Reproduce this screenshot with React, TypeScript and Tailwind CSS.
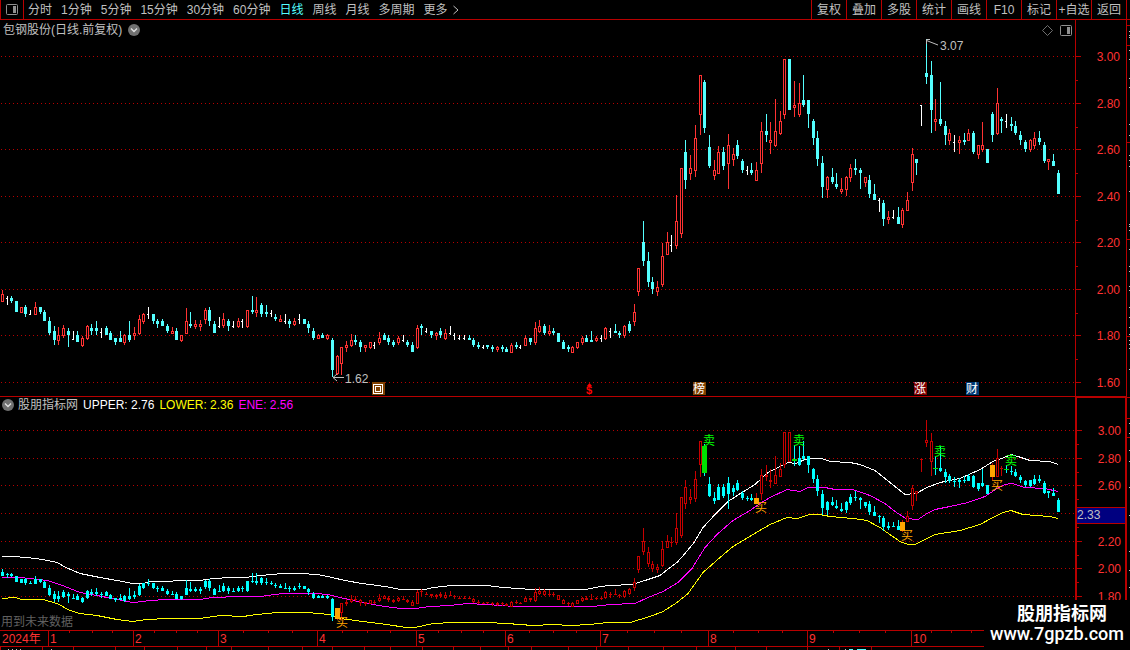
import { clsx } from "clsx";

type Kind = "up" | "down" | "flat";

type Candle = {
  x: number;
  kind: Kind;
  high: number;
  top: number;
  bottom: number;
  low: number;
};

const RED = "#b80000";
const FONT = "font-['Liberation_Sans','Noto_Sans_CJK_SC',sans-serif]";

const periods = ["分时", "1分钟", "5分钟", "15分钟", "30分钟", "60分钟", "日线", "周线", "月线", "多周期"];
const tools = ["复权", "叠加", "多股", "统计", "画线", "F10", "标记", "+自选", "返回"];

// One trading day per entry: u = up, d = down, f = flat, then high, body top, body bottom, low
const daily = `
u 290 294 302 302|f 296 298 298 305|d 296 298 301 303|d 301 301 312 312|u 307 307 313 313|d 305 307 314 317
f 310 314 314 315|u 302 307 315 315|d 307 307 312 314|d 310 312 321 321|d 317 321 333 335|d 326 331 340 345
u 327 335 341 345|u 325 328 336 338|d 328 331 335 347|f 331 339 339 340|d 331 335 342 342|u 336 338 346 347
u 325 326 339 340|d 324 328 331 335|d 321 328 331 335|f 328 332 332 338|d 326 328 335 335|d 331 333 340 340
d 338 338 342 345|d 331 338 342 342|u 334 335 343 345|d 321 335 340 342|u 327 333 336 340|u 315 319 334 335
u 313 314 322 324|f 307 314 314 319|d 314 314 321 324|d 319 321 324 328|d 319 321 326 326|d 324 326 331 333
u 327 331 334 334|d 328 331 340 340|u 335 335 341 342|u 308 321 334 334|d 312 324 326 328|u 320 324 327 329
u 320 324 327 331|u 308 310 320 324|d 307 310 321 326|d 321 324 333 333|f 317 326 326 328|u 313 319 326 328
d 319 321 326 331|f 321 326 326 328|u 318 321 327 328|f 319 321 321 328|u 310 310 327 328|d 296 310 312 314
u 297 310 313 317|d 303 305 314 317|d 305 312 314 317|f 310 313 313 317|d 314 317 319 321|u 315 319 322 322
f 314 321 321 324|d 319 321 324 328|u 318 321 325 326|f 314 319 319 324|d 319 319 324 324|d 321 324 328 333
d 328 331 338 340|u 334 335 339 339|d 333 335 338 338|u 334 335 339 340|d 338 340 370 377|u 355 356 374 375
u 347 347 364 375|u 341 345 348 352|u 334 340 346 347|d 335 340 342 345|d 340 342 347 352|u 345 345 348 352
u 342 342 348 349|f 342 345 345 349|u 332 338 343 345|d 333 335 340 340|d 335 338 342 345|d 340 342 345 347
u 336 338 343 345|f 335 340 340 342|d 340 342 345 347|d 342 345 352 352|u 325 328 348 349|d 324 326 328 335
f 328 331 331 333|d 331 331 335 338|u 332 333 336 340|d 328 331 335 338|u 329 333 339 340|f 326 333 333 335
f 333 335 335 340|f 335 338 338 340|f 335 338 338 340|d 335 338 340 340|d 338 340 345 347|d 342 345 347 349
f 345 347 347 349|d 345 345 347 349|d 345 347 349 352|u 346 347 350 352|d 345 347 349 352|d 347 349 352 352
u 343 345 353 353|d 342 345 347 349|f 345 347 347 349|u 335 338 346 346|d 338 338 342 345|u 322 328 343 345
u 320 326 332 333|d 324 326 333 335|u 325 331 334 336|d 328 331 333 335|d 333 333 342 342|d 340 342 349 349
d 345 347 349 352|u 346 347 353 353|u 342 342 348 349|u 336 338 343 345|d 335 338 342 342|d 331 340 342 342
u 336 338 341 342|f 335 338 338 342|u 327 328 339 340|f 328 331 331 338|d 324 331 333 333|d 331 333 335 338
u 325 326 336 338|d 321 324 331 333|u 304 312 322 326|u 268 268 292 296|d 221 242 261 266|d 252 261 282 287
d 277 282 289 294|u 281 287 292 296|u 243 256 285 287|u 232 242 255 255|f 235 245 245 252|u 195 221 246 249
u 168 168 234 238|d 140 152 180 189|u 155 168 174 180|u 125 138 171 177|u 75 75 115 135|d 80 82 128 133
d 135 147 166 168|u 160 170 176 180|u 146 152 174 174|d 147 152 166 170|u 134 145 164 189|u 148 154 160 166
d 140 145 156 159|d 159 161 170 173|f 166 170 170 175|d 163 170 173 175|u 162 170 181 181|u 122 131 164 173
d 114 131 135 142|u 122 140 143 154|u 99 131 146 147|u 111 121 134 135|u 59 59 115 119|d 59 59 110 110
u 81 105 108 117|u 83 103 115 117|d 75 100 105 107|d 100 100 114 128|d 119 121 138 145|d 131 138 159 166
d 156 163 187 198|u 176 177 190 198|d 168 177 182 184|d 173 184 187 189|u 178 189 192 194|u 176 177 190 196
u 164 168 178 182|d 159 168 170 175|d 168 170 173 189|u 177 177 183 187|d 175 180 194 198|d 184 194 200 200
f 198 200 200 212|d 200 203 219 226|u 211 217 220 224|f 210 217 217 219|d 207 217 224 224|u 208 210 225 228
u 192 200 211 211|u 148 154 183 191|d 159 159 163 175|f 105 105 105 126|d 39 73 77 84|d 61 75 110 133
u 99 119 122 131|d 82 119 124 126|d 121 126 135 145|u 129 133 141 145|f 135 142 142 152|u 136 140 143 154
d 133 140 142 145|u 129 133 141 141|d 131 133 152 154|u 145 145 155 159|u 122 145 150 152|d 149 149 163 163
d 112 114 135 142|u 88 103 134 135|d 117 119 121 133|f 114 121 121 128|d 117 124 126 131|d 121 126 133 135
d 131 135 140 145|d 140 142 149 152|u 139 140 150 152|u 132 138 146 149|d 131 138 142 145|d 142 145 161 163
u 159 159 162 170|d 154 161 166 166|d 170 173 194 194`;

const kinds: Record<string, Kind> = { u: "up", d: "down", f: "flat" };

const candles: Candle[] = daily
  .trim()
  .split(/[|\n]/)
  .map((entry, i) => {
    const [k, ...v] = entry.trim().split(" ");
    const [high, top, bottom, low] = v.map(Number);
    return { x: Math.floor(2.4 + i * 4.714), kind: kinds[k], high, top, bottom, low };
  });

// Trade signals by day index; the trend holds until the next one
const signals: Record<number, { side: "buy" | "sell"; x: number; y: number }> = {
  71: { side: "buy", x: 336, y: 627 },
  149: { side: "sell", x: 703, y: 445 },
  160: { side: "buy", x: 755, y: 512 },
  168: { side: "sell", x: 793, y: 445 },
  191: { side: "buy", x: 901, y: 540 },
  198: { side: "sell", x: 934, y: 456 },
  210: { side: "buy", x: 991, y: 490 },
  213: { side: "sell", x: 1005, y: 465 },
};

const bands = [
  {
    name: "UPPER",
    value: "2.76",
    color: "text-white",
    points:
      "2,556 14,556 36,558 48,560 57,562 66,567 80,573 100,577 117,580 133,583 143,583 150,581 167,581 180,580 200,580 213,578 232,577 245,577 260,575 283,573 300,573 318,574 332,577 345,580 362,583 385,586 401,589 425,589 433,587 452,585 487,585 503,587 519,588 530,589 586,589 600,586 610,585 632,584 645,580 660,575 670,567 677,562 685,553 694,542 703,527 715,514 728,501 742,492 755,484 768,472 780,466 788,462 796,463 805,459 812,458 822,458 830,461 850,462 860,464 875,470 890,482 905,494 916,493 927,487 940,482 960,478 980,469 993,461 1004,457 1011,454 1018,456 1030,460 1050,461 1058,464",
  },
  {
    name: "LOWER",
    value: "2.36",
    color: "text-[#ffff00]",
    points:
      "2,598 15,597 22,599 43,599 57,603 70,610 80,613 97,615 117,619 133,621 147,619 167,618 200,618 220,615 243,616 257,614 277,612 307,612 330,614 340,618 363,621 387,624 406,627 415,627 433,623 453,622 487,622 507,623 533,625 553,624 570,625 590,624 607,622 630,622 650,616 663,611 677,602 688,593 703,572 720,557 733,546 753,534 770,524 787,517 797,518 810,514 820,514 830,516 853,518 867,520 880,527 887,532 900,541 908,544 915,544 935,534 960,530 980,524 993,517 1003,512 1011,510 1023,514 1050,516 1058,518",
  },
  {
    name: "ENE",
    value: "2.56",
    color: "text-[#ff00ff]",
    points:
      "2,577 20,577 47,580 60,584 80,592 97,595 117,599 133,602 143,601 150,600 167,599 200,599 212,597 240,596 260,596 283,593 315,593 328,594 340,597 362,602 385,606 401,608 415,608 430,606 450,605 467,603 487,604 515,606 593,606 610,604 635,603 648,597 663,591 678,582 692,568 700,555 705,547 718,533 733,520 750,510 760,503 770,497 787,489 800,491 808,487 825,487 835,489 853,489 870,495 885,503 895,511 906,518 918,519 927,513 935,509 950,506 968,502 985,496 997,488 1005,484 1012,483 1025,487 1045,488 1058,491",
  },
];

const priceScale = [
  { label: "3.00", y: 56 },
  { label: "2.80", y: 103 },
  { label: "2.60", y: 149 },
  { label: "2.40", y: 196 },
  { label: "2.20", y: 242 },
  { label: "2.00", y: 289 },
  { label: "1.80", y: 335 },
  { label: "1.60", y: 382 },
];

const indicatorScale = [
  { label: "3.00", y: 430 },
  { label: "2.80", y: 458 },
  { label: "2.60", y: 485 },
  { label: "", y: 513 },
  { label: "2.20", y: 541 },
  { label: "2.00", y: 568 },
  { label: "1.80", y: 596 },
];

const months = [48, 133, 218, 317, 416, 505, 600, 708, 807, 911];
const weeks = [
  69, 92, 112, 154, 176, 197, 243, 268, 292, 342, 367, 390, 438, 461, 483, 529, 553, 576, 627, 654, 681, 733, 758, 782,
  833, 859, 885, 931, 951, 971,
];
const footTicks = [
  0, 42, 73, 115, 144, 177, 206, 231, 268, 302, 332, 364, 390, 422, 453, 480, 508, 531, 568, 596, 628, 663, 696, 735, 766,
  807, 839, 871,
];

const edgeMarks = [25, 45, 142, 239, 336, 397, 418, 437];
const edgeDots = [
  31, 35, 37, 50, 59, 78, 87, 124, 135, 155, 160, 166, 191, 224, 226, 230, 249, 266, 271, 286, 290, 307, 317, 327, 334,
  340, 344, 348, 369, 423, 433, 450, 461, 487, 515, 551, 570, 587,
];

const badges = [
  { text: "榜", x: 693, fill: "#804000" },
  { text: "涨", x: 914, fill: "#800000" },
  { text: "财", x: 966, fill: "#003a75" },
];

// Price panel pixels to indicator panel pixels
const toIndicator = (y: number) => Math.round(430.5 + (y - 56.5) * 0.594);

function SidePanelIcon() {
  return (
    <svg width="12" height="11" viewBox="0 0 12 11" aria-hidden>
      <rect x="0.5" y="0.5" width="11" height="10" rx="1" fill="none" stroke="#909090" />
      <rect x="7" y="2" width="3" height="7" fill="#909090" />
    </svg>
  );
}

function CollapseButton({ label }: { label: string }) {
  return (
    <button type="button" aria-label={label} className="grid h-3 w-3 place-items-center rounded-full bg-[#707070]">
      <svg width="8" height="6" viewBox="0 0 8 6" aria-hidden>
        <path d="M1 1.5 4 4.5 7 1.5" fill="none" stroke="#e0e0e0" strokeWidth="1.4" />
      </svg>
    </button>
  );
}

function Toolbar() {
  return (
    <header className="flex h-5 items-stretch border-b border-[#b80000]">
      <button
        type="button"
        aria-label="侧栏"
        className="grid w-6 shrink-0 place-items-center border-x border-[#b80000]"
      >
        <SidePanelIcon />
      </button>
      <nav className="flex flex-1 items-center gap-[9px] pl-1 whitespace-nowrap">
        {periods.map((p) => (
          <button key={p} type="button" className={clsx(p === "日线" && "text-[#54ffff]")}>
            {p}
          </button>
        ))}
        <button type="button" className="flex items-center gap-1">
          更多
          <svg width="8" height="10" viewBox="0 0 8 10" aria-hidden>
            <path d="M1.5 1 6 5 1.5 9" fill="none" stroke="#c0c0c0" />
          </svg>
        </button>
      </nav>
      <div className="mr-[3px] flex border-r border-[#b80000]">
        {tools.map((t) => (
          <button key={t} type="button" className="w-[35px] border-l border-[#b80000] whitespace-nowrap">
            {t}
          </button>
        ))}
      </div>
    </header>
  );
}

function Grid({ scale }: { scale: { y: number }[] }) {
  return (
    <>
      {scale.map(({ y }) => (
        <line key={y} x1="1" x2="100%" y1={y + 0.5} y2={y + 0.5} stroke={RED} strokeDasharray="1 3" />
      ))}
    </>
  );
}

function Bar({ x, high, top, bottom, low, color, hollow }: Omit<Candle, "kind"> & {
  color: string;
  hollow?: boolean;
}) {
  return (
    <g shapeRendering="crispEdges">
      <rect x={x} y={high} width="1" height={Math.max(1, low - high)} fill={color} />
      <rect x={x - 1} y={top} width="3" height={Math.max(1, bottom - top)} fill={color} />
      {hollow && bottom - top > 2 && <rect x={x} y={top + 1} width="1" height={bottom - top - 2} fill="#000" />}
    </g>
  );
}

function PriceCandles() {
  return (
    <>
      {candles.map((c) =>
        c.kind === "flat" ? (
          <g key={c.x} fill="#fff" shapeRendering="crispEdges">
            <rect x={c.x} y={c.high} width="1" height={c.low - c.high} />
            <rect x={c.x - 1} y={c.top} width="2" height="1" />
          </g>
        ) : (
          <Bar key={c.x} {...c} hollow={c.kind === "up"} color={c.kind === "up" ? "#ff3232" : "#54ffff"} />
        ),
      )}
    </>
  );
}

function TrendCandles() {
  let holding = false;
  return (
    <>
      {candles.map((c, i) => {
        const signal = signals[i];
        if (signal) holding = signal.side === "buy";
        const bar = {
          x: c.x,
          high: toIndicator(c.high),
          top: toIndicator(c.top),
          bottom: toIndicator(c.bottom),
          low: toIndicator(c.low),
        };
        const color = holding ? "#c80000" : "#00ffff";
        if (!signal) return <Bar key={c.x} {...bar} hollow={holding} color={color} />;
        return (
          <g key={c.x}>
            <Bar {...bar} color={color} />
            <rect
              x={c.x - 2}
              y={bar.top}
              width="5"
              height={Math.max(1, bar.bottom - bar.top)}
              fill={signal.side === "buy" ? "#ffa500" : "#00e000"}
            />
          </g>
        );
      })}
    </>
  );
}

function PriceChart() {
  return (
    <svg className="block h-[376px] w-full overflow-visible text-[12px]" role="img" aria-label="包钢股份日线">
      <g transform="translate(0 -20)">
        <Grid scale={priceScale} />
        <PriceCandles />

        {/* Highest and lowest price */}
        <g fill="none" stroke="#c0c0c0">
          <path d="M926.5 40.5 938 45M930 39.5H926.5V44" />
          <path d="M333 377.5H344M337 374 333 377.5 337 381" />
        </g>
        <text x="940" y="50" fill="#c0c0c0">3.07</text>
        <text x="345" y="383" fill="#c0c0c0">1.62</text>

        {/* Event badges */}
        <g shapeRendering="crispEdges">
          <rect x="372" y="382" width="13" height="13" fill="#804000" />
          <rect x="373.5" y="384.5" width="9" height="9" fill="none" stroke="#fff" />
          <rect x="375.5" y="386.5" width="5" height="5" fill="none" stroke="#fff" />
        </g>
        <path d="M589.5 383 592 386H587Z" fill="#ff0000" />
        <text x="586" y="394" fill="#ff0000" className="text-[11px] font-bold">$</text>
        {badges.map((b) => (
          <g key={b.text}>
            <rect x={b.x} y="382" width="13" height="13" fill={b.fill} />
            <text x={b.x} y="393" fill="#fff">{b.text}</text>
          </g>
        ))}
      </g>
    </svg>
  );
}

function IndicatorChart() {
  return (
    <svg className="block h-[233px] w-full text-[12px]" role="img" aria-label="股朋指标网">
      <g transform="translate(0 -397)">
        <Grid scale={indicatorScale} />
        {bands.map((b) => (
          <polyline
            key={b.name}
            points={b.points}
            transform="translate(0 0.5)"
            fill="none"
            stroke="currentColor"
            shapeRendering="crispEdges"
            className={b.color}
          />
        ))}
        <TrendCandles />
        {Object.values(signals).map((s) => (
          <text key={s.x} x={s.x} y={s.y} fill={s.side === "buy" ? "#ffa500" : "#00ff00"}>
            {s.side === "buy" ? "买" : "卖"}
          </text>
        ))}
      </g>
    </svg>
  );
}

function Scale({ scale, offset }: { scale: { label: string; y: number }[]; offset: number }) {
  const step = (scale[1].y - scale[0].y) / 2;
  return (
    <svg className="block h-full w-full text-[12px]" aria-hidden>
      <g transform={`translate(0 ${-offset})`} fill={RED} shapeRendering="crispEdges">
        {scale.map(({ label, y }, i) => (
          <g key={y}>
            <rect x="0" y={y} width="5" height="1" />
            {i < scale.length - 1 && <rect x="0" y={Math.round(y + step)} width="2" height="1" />}
            <text x="44" y={y + 5} textAnchor="end" fill="#ff3232">
              {label}
            </text>
          </g>
        ))}
      </g>
    </svg>
  );
}

function Timeline() {
  return (
    <svg className="block h-5 w-full text-[12px]" role="img" aria-label="时间轴">
      <g fill={RED} shapeRendering="crispEdges">
        <rect width="100%" height="1" />
        <rect y="16" width="100%" height="1" />
        {months.map((x) => (
          <rect key={x} x={x} width="1" height="16" />
        ))}
        {weeks.map((x) => (
          <rect key={x} x={x} width="1" height="3" />
        ))}
        {footTicks.map((x) => (
          <rect key={x} x={x} y="16" width="1" height="4" />
        ))}
      </g>
      <g fill="#c0c0c0" shapeRendering="crispEdges">
        <rect x="8" y="19" width="1" height="1" />
        <rect x="12" y="19" width="1" height="1" />
        <rect x="16" y="19" width="1" height="1" />
        <rect x="20" y="19" width="1" height="1" />
        <rect x="51" y="19" width="1" height="1" />
        <rect x="828" y="19" width="1" height="1" />
        <rect x="845" y="19" width="1" height="1" />
        <rect x="849" y="19" width="4" height="1" fill="#54ffff" />
        <rect x="857" y="19" width="9" height="1" fill="#54ffff" />
      </g>
      <g fill="#ff3232">
        <text x="2" y="13">2024年</text>
        {months.map((x, i) => (
          <text key={x} x={x + 2} y="13">
            {i + 1}
          </text>
        ))}
      </g>
    </svg>
  );
}

export default function App() {
  return (
    <div className={clsx("relative min-h-screen overflow-hidden bg-black text-[12px] leading-4 text-[#c0c0c0]", FONT)}>
      <Toolbar />

      <main className="flex">
        <div className="min-w-0 flex-1">
          {/* Price panel */}
          <section className="relative border-b border-[#b80000]">
            <div className="absolute inset-x-0 top-0 flex h-5 items-center gap-1.5 pr-[3px] pl-[3px]">
              <h1>包钢股份(日线.前复权)</h1>
              <CollapseButton label="主图菜单" />
              <div className="ml-auto flex items-center gap-[7px]">
                <button type="button" aria-label="标注">
                  <svg width="11" height="11" viewBox="0 0 11 11" aria-hidden>
                    <path d="M5.5 0.5 10.5 5.5 5.5 10.5 0.5 5.5Z" fill="none" stroke="#707070" />
                  </svg>
                </button>
                <button type="button" aria-label="右侧栏">
                  <SidePanelIcon />
                </button>
              </div>
            </div>
            <PriceChart />
          </section>

          {/* Indicator panel */}
          <section className="relative">
            <div className="absolute inset-x-0 top-0 flex h-4 items-center gap-[5px] pl-0.5">
              <div className="flex items-center gap-1">
                <CollapseButton label="副图菜单" />
                <h2>股朋指标网</h2>
              </div>
              {bands.map((b) => (
                <span key={b.name} className={b.color}>
                  {b.name}: {b.value}
                </span>
              ))}
            </div>
            <IndicatorChart />
            <p className="absolute bottom-0 left-px text-[#606060]">用到未来数据</p>
          </section>
          <Timeline />
        </div>

        {/* Price scales */}
        <aside className="flex w-[52px] shrink-0 flex-col">
          <div className="h-[376px] border-x border-[#b80000]">
            <Scale scale={priceScale} offset={20} />
          </div>
          <div className="relative h-[254px] border-2 border-[#b80000]">
            <Scale scale={indicatorScale} offset={398} />
            <div className="absolute inset-x-0 top-[109px] h-[17px] border-y border-[#b80000] bg-[#000080] leading-[15px]">
              2.33
            </div>
          </div>
        </aside>

        {/* Edge of the quote sidebar */}
        <svg className="h-[610px] w-[3px] shrink-0" aria-hidden>
          <g transform="translate(0 -20)" shapeRendering="crispEdges">
            {edgeMarks.map((y) => (
              <rect key={y} y={y} width="3" height="1" fill={RED} />
            ))}
            {edgeDots.map((y) => (
              <rect key={y} x="2" y={y} width="1" height="1" fill="#c0c0c0" />
            ))}
          </g>
        </svg>
      </main>

      {/* Site mark */}
      <a
        href="#"
        className="absolute right-0 bottom-0 flex h-[50px] w-[146px] flex-col items-center bg-black pt-1 text-white"
      >
        <span className="pl-2.5 text-[18px] leading-5 font-bold">股朋指标网</span>
        <span className="font-['Roboto',sans-serif] text-[18px] leading-5 font-medium">www.7gpzb.com</span>
      </a>
    </div>
  );
}
